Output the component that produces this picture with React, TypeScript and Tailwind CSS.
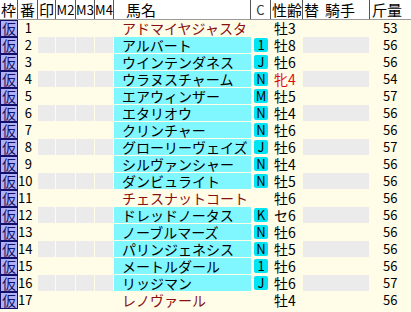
import React from "react";

interface Horse {
  no: number;
  name: string;
  c: string;
  sex: string;
  kin: number;
  mark?: boolean;
  mare?: boolean;
}

const horses: Horse[] = [
  { no: 1, name: "アドマイヤジャスタ", c: "", sex: "牡3", kin: 53, mark: true },
  { no: 2, name: "アルバート", c: "1", sex: "牡8", kin: 56 },
  { no: 3, name: "ウインテンダネス", c: "J", sex: "牡6", kin: 56 },
  { no: 4, name: "ウラヌスチャーム", c: "N", sex: "牝4", kin: 54, mare: true },
  { no: 5, name: "エアウィンザー", c: "M", sex: "牡5", kin: 57 },
  { no: 6, name: "エタリオウ", c: "N", sex: "牡4", kin: 56 },
  { no: 7, name: "クリンチャー", c: "N", sex: "牡6", kin: 56 },
  { no: 8, name: "グローリーヴェイズ", c: "J", sex: "牡6", kin: 57 },
  { no: 9, name: "シルヴァンシャー", c: "N", sex: "牡4", kin: 56 },
  { no: 10, name: "ダンビュライト", c: "N", sex: "牡5", kin: 56 },
  { no: 11, name: "チェスナットコート", c: "", sex: "牡6", kin: 56, mark: true },
  { no: 12, name: "ドレッドノータス", c: "K", sex: "セ6", kin: 56 },
  { no: 13, name: "ノーブルマーズ", c: "N", sex: "牡6", kin: 56 },
  { no: 14, name: "パリンジェネシス", c: "N", sex: "牡5", kin: 56 },
  { no: 15, name: "メートルダール", c: "1", sex: "牡6", kin: 56 },
  { no: 16, name: "リッジマン", c: "J", sex: "牡6", kin: 57 },
  { no: 17, name: "レノヴァール", c: "", sex: "牡4", kin: 56, mark: true },
];

const font = { fontFamily: '"Noto Sans CJK JP", sans-serif' };

function Head({ w, children, className = "" }: { w: string; children?: React.ReactNode; className?: string }) {
  return (
    <div className={`${w} shrink-0 h-full border-r border-[#555] flex items-center ${className}`}>
      {children}
    </div>
  );
}

export default function App() {
  return (
    <div className="w-[411px] h-[312px] bg-[#fffce8] text-black text-[14px] overflow-hidden" style={font}>
      <div className="flex h-[20px] bg-white border-b border-[#9a9a9a] leading-[19px] text-[15px]">
        <Head w="w-[18px]" className="justify-center">枠</Head>
        <Head w="w-[20px]" className="justify-center">番</Head>
        <Head w="w-[18px]" className="justify-center">印</Head>
        <Head w="w-[20px]" className="justify-center text-[13px]">M2</Head>
        <Head w="w-[19px]" className="justify-center text-[13px]">M3</Head>
        <Head w="w-[19px]" className="justify-center text-[13px]">M4</Head>
        <Head w="w-[137px]" className="pl-[12px]">馬名</Head>
        <Head w="w-[20px]" className="justify-center text-[13px] text-[#333]">C</Head>
        <Head w="w-[32px]" className="pl-[1px]">性齢</Head>
        <Head w="w-[67px]" className="pl-[1px]">
          <span>替</span>
          <span className="ml-[6px]">騎手</span>
        </Head>
        <div className="flex-1 h-full flex items-center pl-[2px]">斤量</div>
      </div>
      {horses.map((h) => {
        const even = h.no % 2 === 0;
        const gray = even ? "bg-[#ebebeb]" : "";
        return (
          <div key={h.no} className="flex h-[17px] leading-[16px]">
            <div className="w-[18px] h-[17px] shrink-0 bg-[#b0b0f4] border border-[#10106a] text-[#10106a] flex items-center justify-center text-[14px] leading-[15px]">
              仮
            </div>
            <div className="w-[20px] h-[17px] shrink-0 text-right pr-[6px] text-[13px]">{h.no}</div>
            <div className={`w-[17px] shrink-0 mr-px h-[16px] ${gray}`} />
            <div className={`w-[19px] shrink-0 mr-px h-[16px] ${gray}`} />
            <div className={`w-[18px] shrink-0 mr-px h-[16px] ${gray}`} />
            <div className={`w-[18px] shrink-0 mr-px h-[16px] ${gray}`} />
            <div
              className={`w-[137px] shrink-0 h-[16px] pl-[8px] whitespace-nowrap ${
                h.mark ? "text-[#8a1010]" : "bg-[#80f6ff]"
              }`}
            >
              {h.name}
            </div>
            <div className="w-[20px] shrink-0 flex items-start justify-center pt-[1px]">
              {h.c && (
                <div className="w-[14px] h-[14px] bg-[#00e4f4] rounded-[2px] flex items-center justify-center text-[13px] leading-[14px]">
                  {h.c}
                </div>
              )}
            </div>
            <div className={`w-[32px] h-[17px] shrink-0 pl-[3px] ${h.mare ? "text-[#e01010]" : ""}`}>
              {h.sex}
            </div>
            <div className={`w-[66px] shrink-0 mr-px h-[16px] ${gray}`} />
            <div className="flex-1 h-[17px] pl-[13px] text-[13px]">{h.kin}</div>
          </div>
        );
      })}
    </div>
  );
}
